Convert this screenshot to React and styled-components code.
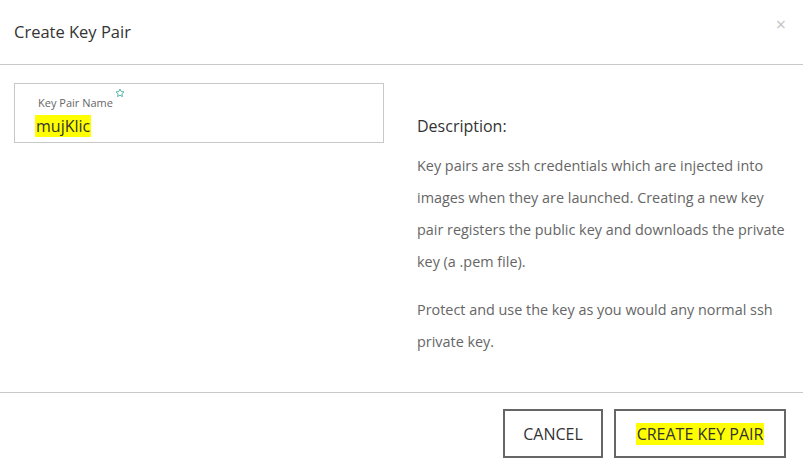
import React from 'react'
import styled, { createGlobalStyle } from 'styled-components'

const Global = createGlobalStyle`
body{
  margin:0;
  background:#fff;
  font-family:"Open Sans", "Noto Sans", sans-serif;
}
`;

export default function App() {
    return (
        <>
            <Global />
            <Modal>
                <Header>
                    <Title>Create Key Pair</Title>
                    <Close>×</Close>
                </Header>
                <Body>
                    <Left>
                        <Field>
                            <Label>
                                Key Pair Name
                                <Star viewBox="0 0 24 24">
                                    <path d="M12 2.5l2.9 6.1 6.6.8-4.9 4.6 1.3 6.6L12 17.3l-5.9 3.3 1.3-6.6-4.9-4.6 6.6-.8z" />
                                </Star>
                            </Label>
                            <Value><Mark>mujKlic</Mark></Value>
                        </Field>
                    </Left>
                    <Right>
                        <DescTitle>Description:</DescTitle>
                        <Para>Key pairs are ssh credentials which are injected into images when they are launched. Creating a new key pair registers the public key and downloads the private key (a .pem file).</Para>
                        <Para>Protect and use the key as you would any normal ssh private key.</Para>
                    </Right>
                </Body>
                <Footer>
                    <Button>CANCEL</Button>
                    <Button wide><Mark>CREATE KEY PAIR</Mark></Button>
                </Footer>
            </Modal>
        </>
    )
}

const Modal=styled.div`
width:803px;
height:469px;
display:flex;
flex-direction:column;
background:#fff;
`;
const Header=styled.div`
height:65px;
box-sizing:border-box;
border-bottom:1px solid #c8c8c8;
display:flex;
align-items:center;
justify-content:space-between;
padding:0 17px 2px 14px;
`;
const Title=styled.div`
font-size:16.5px;
color:#333;
`;
const Close=styled.div`
font-size:18px;
color:#c4c4c4;
line-height:1;
margin-top:-14px;
`;
const Body=styled.div`
flex:1;
display:grid;
grid-template-columns:370px 372px;
column-gap:33px;
padding:18px 13px 0 14px;
border-bottom:1px solid #c8c8c8;
`;
const Left=styled.div``;
const Field=styled.div`
height:60px;
box-sizing:border-box;
border:1px solid #c8c8c8;
padding:11px 0 0 20px;
`;
const Label=styled.div`
font-size:11px;
color:#666;
margin-left:3px;
display:flex;
align-items:flex-start;
gap:2px;
`;
const Star=styled.svg`
width:10px;
height:10px;
margin-top:-7px;
fill:none;
stroke:#3aa99a;
stroke-width:2;
`;
const Value=styled.div`
font-size:16px;
color:#333;
margin-top:5px;
`;
const Mark=styled.span`
background:#ffff00;
padding:0 1px;
`;
const Right=styled.div`
padding-top:32px;
`;
const DescTitle=styled.div`
font-size:16px;
color:#333;
margin-bottom:13px;
`;
const Para=styled.p`
margin:0 0 16px;
font-size:14.4px;
line-height:32px;
color:#666;
`;
const Footer=styled.div`
height:76px;
display:flex;
justify-content:flex-end;
align-items:flex-start;
gap:11px;
padding:16px 17px 0 0;
box-sizing:border-box;
`;
const Button=styled.button`
height:49px;
width:${p=>p.wide?'172px':'100px'};
background:#fff;
border:2px solid #666;
font-family:"Open Sans", "Noto Sans", sans-serif;
font-size:16px;
color:#333;
cursor:pointer;
`;
